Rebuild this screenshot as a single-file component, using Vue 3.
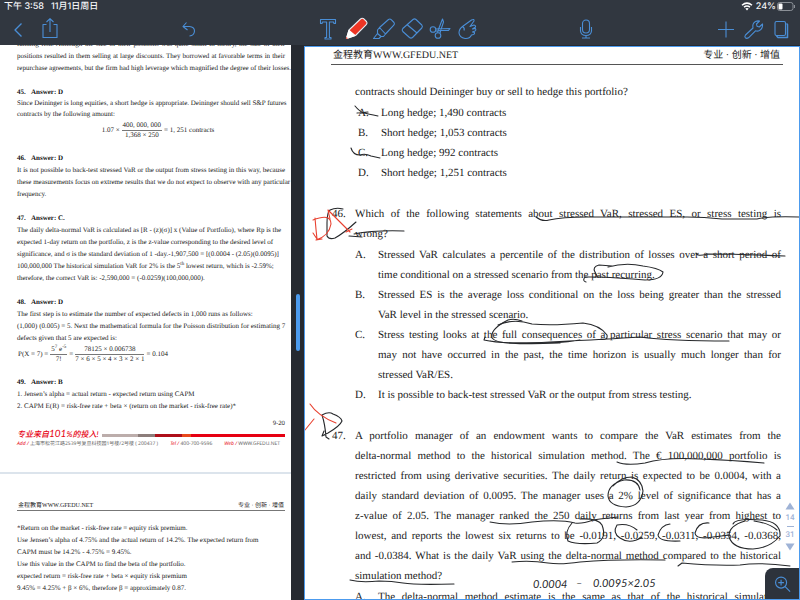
<script setup>
const questions = [
  {
    number: '',
    wide: true,
    stem: [{ t: 'contracts should Deininger buy or sell to hedge this portfolio?' }],
    options: [
      { k: 'A.', lines: [{ t: 'Long hedge; 1,490 contracts' }] },
      { k: 'B.', lines: [{ t: 'Short hedge; 1,053 contracts' }] },
      { k: 'C.', lines: [{ t: 'Long hedge; 992 contracts' }] },
      { k: 'D.', lines: [{ t: 'Short hedge; 1,251 contracts' }] },
    ],
  },
  {
    number: '46.',
    stem: [
      { t: 'Which of the following statements about stressed VaR, stressed ES, or stress testing is', j: true },
      { t: 'wrong?' },
    ],
    options: [
      {
        k: 'A.',
        lines: [
          { t: 'Stressed VaR calculates a percentile of the distribution of losses over a short period of', j: true },
          { t: 'time conditional on a stressed scenario from the past recurring.' },
        ],
      },
      {
        k: 'B.',
        lines: [
          { t: 'Stressed ES is the average loss conditional on the loss being greater than the stressed', j: true },
          { t: 'VaR level in the stressed scenario.' },
        ],
      },
      {
        k: 'C.',
        lines: [
          { t: 'Stress testing looks at the full consequences of a particular stress scenario that may or', j: true },
          { t: 'may not have occurred in the past, the time horizon is usually much longer than for', j: true },
          { t: 'stressed VaR/ES.' },
        ],
      },
      { k: 'D.', lines: [{ t: 'It is possible to back-test stressed VaR or the output from stress testing.' }] },
    ],
  },
  {
    number: '47.',
    stem: [
      { t: 'A portfolio manager of an endowment wants to compare the VaR estimates from the', j: true },
      { t: 'delta-normal method to the historical simulation method. The € 100,000,000 portfolio is', j: true },
      { t: 'restricted from using derivative securities. The daily return is expected to be 0.0004, with a', j: true },
      { t: 'daily standard deviation of 0.0095. The manager uses a 2% level of significance that has a', j: true },
      { t: 'z-value of 2.05. The manager ranked the 250 daily returns from last year from highest to', j: true },
      { t: 'lowest, and reports the lowest six returns to be -0.0191, -0.0259, -0.0311, -0.0354, -0.0368,', j: true },
      { t: 'and -0.0384. What is the daily VaR using the delta-normal method compared to the historical', j: true },
      { t: 'simulation method?' },
    ],
    options: [
      {
        k: 'A.',
        lines: [{ t: 'The delta-normal method estimate is the same as that of the historical simulation', j: true }],
      },
    ],
  },
]

const blackInk = [
  'M355 106Q360 112 364 113T378 116M357 113L368 112',
  'M351 148Q353 155 360 155Q365 153 371 156L380 158',
  'M343 209Q336 207 330 210Q327 213 327 223V236Q329 240 335 238Q344 233 356 222',
  'M349 236L362 237M354 234Q374 230 404 231',
  'M536 217Q542 222 549 220Q562 217 587 217H687Q704 217 722 219H757Q770 216 799 217',
  'M696 253Q697 257 707 254Q740 254 785 256',
  'M608 267Q626 262 643 266Q658 268 663 272Q662 280 645 280Q620 278 600 277H585Q582 281 586 282M595 272Q592 267 599 265L612 266M595 272L597 276',
  'M522 321Q514 318 508 320Q490 329 492 338Q496 343 512 343H560',
  'M498 325Q514 318 532 324Q552 326 583 323Q600 325 607 335Q608 341 601 339M485 337L484 340Q505 345 550 342Q610 339 640 337Q670 341 729 341M490 341Q535 347 580 340',
  'M322 415Q329 411 333 414Q341 417 342 421Q340 426 328 433L322 436L324 431M322 415Q325 424 326 437L329 439',
  'M617 462Q626 466 645 463Q665 457 700 459Q730 460 764 463',
  'M613 486Q621 477 632 477Q642 480 643 491Q641 506 626 507Q609 506 608 496Q608 484 624 480Q638 479 640 490',
  'M490 522Q508 526 532 522Q560 519 575 523Q582 524 593 520L600 519L618 517',
  'M572 523Q564 532 568 541Q577 545 597 543Q607 538 602 525Q598 518 580 519',
  'M637 530Q629 523 617 525Q612 533 620 538Q630 545 642 537',
  'M670 524Q661 525 658 535Q659 542 680 541',
  'M709 523Q698 522 695 533Q696 540 713 537L730 535',
  'M745 521Q728 526 729 537Q733 549 753 549Q770 548 780 536Q781 522 762 520Q735 518 733 524M754 521Q769 523 777 530',
  'M512 562Q530 560 548 563Q560 565 580 562Q615 559 665 560',
  'M678 566L682 563Q714 566 740 565Q760 562 790 566',
  'M350 580Q361 583 379 581Q392 581 403 583T454 584',
]
const redInk = [
  'M315 218Q316 230 317 239L313 233M313 220Q331 213 331 224Q329 236 316 240L322 239',
  'M328 210L350 232M328 210L330 219M346 232L352 229',
  'M310 404Q318 416 336 423M305 430L314 419',
]
</script>

<template>
  <div class="app">
    <header class="topbar">
      <div class="status">
        <div class="status-side"><span>下午 3:58</span><span>11月1日周日</span></div>
        <div class="status-side battery-side">
          <svg class="wifi" viewBox="0 0 12 9"><path d="M1 3.2Q6-1 11 3.2M3 5.2Q6 3 9 5.2" fill="none" stroke="#fff" stroke-width="1.5" /><path d="M4.3 6.6Q6 5.4 7.7 6.6L6 8.6Z" fill="#fff" /></svg>
          <span>24%</span>
          <svg class="battery" viewBox="0 0 19 9"><rect x=".5" y=".5" width="15.5" height="8" rx="2.2" fill="none" stroke="#8b9097" /><rect x="1.5" y="1.5" width="4" height="6" rx="1" fill="#fff" /><path d="M17.5 3V6" stroke="#8b9097" /></svg>
        </div>
      </div>
      <nav class="tools">
        <div class="group spaced">
          <button aria-label="Back"><svg viewBox="0 0 24 24"><path d="M15.5 6.5L9 13L15.5 19.5" stroke-width="1.4" /></svg></button>
          <button aria-label="Share"><svg viewBox="0 0 24 24"><path d="M8.5 7.5H5V20.5H19V7.5H15.5M12 15V2M8.5 5L12 1.7L15.5 5" /></svg></button>
        </div>
        <div class="group">
          <button aria-label="Undo"><svg viewBox="0 0 24 24"><path d="M9.500 5.500L6 9.500L10.500 13M6.300 9.500H12.500Q17.500 10 17.500 14Q17.300 18.500 12.500 19" /></svg></button>
        </div>
        <div class="group">
          <button aria-label="Text"><svg viewBox="0 0 24 24"><path d="M4.500 2.500H19.500V6.500H18L17.500 5H13.400V20.500H15V22H9V20.500H10.600V5H6.500L6 6.500H4.500Z" /></svg></button>
          <button aria-label="Pen"><svg viewBox="0 0 24 24"><path d="M16.500 2Q18 .5 19.800 1.800L22.500 4.500Q23.600 6 22.500 7.300L11.500 18.500L2.500 21.500L5 13Z" fill="#ee3524" stroke="#e9edf2" /><path d="M5 13.500L11 18.500L2.500 21.500Z" fill="#fff" stroke="#fff" /><path d="M2.200 20L4 21.200L2 22Z" fill="#ee3524" stroke="none" /></svg></button>
          <button aria-label="Highlighter"><svg viewBox="0 0 24 24"><path d="M7.500 10.500L16.500 2.500Q18 1.500 19.200 2.700L22 5.500Q23 7 21.800 8.200L13.500 17ZM7.500 10.500L5.500 13L5.500 16.500L9 19.500L11.500 19.500L13.500 17M5.500 16.500L1.500 21.500H7L9 19.500" /></svg></button>
          <button aria-label="Eraser"><svg viewBox="0 0 24 24"><path d="M13 2.500Q14.500 1.200 16 2.500L21.800 8Q23 9.500 21.800 11L12.500 20.500Q11 21.700 9.500 20.500L2.800 14.500Q1.500 13 2.800 11.500ZM7.500 8L17 16" /></svg></button>
          <button aria-label="Scissors"><svg viewBox="0 0 24 24"><circle cx="5" cy="12.500" r="2.800" /><circle cx="10" cy="18.500" r="2.800" /><path d="M7.800 12L22 11.500L20.500 13.500L12 13.500L7.500 14M9.500 15.700L11 11L14.500 2L15.500 5L13 12.500L12 16.200" /></svg></button>
          <button aria-label="Hand"><svg viewBox="0 0 24 24"><path d="M6.500 9.500L15.500 3Q18.500 1.500 18 4L14 9.500L18 8Q20 8.500 19.500 10L16.500 12L19.500 11.500Q20.500 13 19 14L16.500 15L18.500 15.500Q19 17 17.500 17.500L15.500 18Q13.500 22 9 21.500Q3.500 20.500 3 16Q3 12 6.500 9.500ZM6.500 9.500Q9 11 8 13.500" /></svg></button>
        </div>
        <div class="group">
          <button aria-label="Microphone"><svg viewBox="0 0 24 24"><rect x="8.500" y="3" width="7" height="13" rx="3.500" /><path d="M6.500 10V14Q7 18.500 12 18.500Q17 18.500 17.500 14V10M12 18.500V21M8 21H16" /></svg></button>
        </div>
        <div class="group">
          <button aria-label="Add"><svg viewBox="0 0 24 24"><path d="M12 4.500V20.500M4 12.500H20" /></svg></button>
          <button aria-label="Settings"><svg viewBox="0 0 24 24"><path d="M3.500 18L11 11Q10 6.500 13.500 4.500Q15.500 3.500 17.500 4L14.500 7L15 9.200L17.300 10L20.500 7Q21 11.500 17.500 13.500Q15.500 14.500 13.500 13.800L6.500 20.800Q4.500 22 3.300 20.700Q2.300 19.500 3.500 18Z" /></svg></button>
          <button aria-label="Pages"><svg viewBox="0 0 24 24"><rect x="5" y="4.500" width="10.500" height="14" rx="1.500" /><path d="M16.500 6.500L17.500 7.500V20.500H8L6.500 19" stroke-width="1.500" /></svg></button>
        </div>
      </nav>
    </header>

    <main class="split">
      <section class="answers">
        <article class="sheet first">
          <div class="para lead">
            <p class="just">funding risk. Although the size of their positions was quite small in theory, the size of their</p>
            <p class="just">positions resulted in them selling at large discounts. They borrowed at favorable terms in their</p>
            <p>repurchase agreements, but the firm had high leverage which magnified the degree of their losses.</p>
          </div>
          <div class="para tight">
            <h3><span>45.</span>Answer: D</h3>
            <p class="just">Since Deininger is long equities, a short hedge is appropriate. Deininger should sell S&amp;P futures</p>
            <p>contracts by the following amount:</p>
            <div class="formula centered">
              <span>1.07 ×</span><span class="frac"><span>400, 000, 000</span><span>1,368 × 250</span></span><span>= 1, 251 contracts</span>
            </div>
          </div>
          <div class="para">
            <h3><span>46.</span>Answer: D</h3>
            <p class="just">It is not possible to back-test stressed VaR or the output from stress testing in this way, because</p>
            <p class="just">these measurements focus on extreme results that we do not expect to observe with any particular</p>
            <p>frequency.</p>
          </div>
          <div class="para">
            <h3><span>47.</span>Answer: C.</h3>
            <p>The daily delta-normal VaR is calculated as [R - (z)(σ)] x (Value of Portfolio), where Rp is the</p>
            <p>expected 1-day return on the portfolio, z is the z-value corresponding to the desired level of</p>
            <p>significance, and σ is the standard deviation of 1 -day.-1,907,500 = [(0.0004 - (2.05)(0.0095)]</p>
            <p>100,000,000 The historical simulation VaR for 2% is the 5<sup>th</sup> lowest return, which is -2.59%;</p>
            <p>therefore, the correct VaR is: -2,590,000 = (-0.0259)(100,000,000).</p>
          </div>
          <div class="para poisson">
            <h3><span>48.</span>Answer: D</h3>
            <p>The first step is to estimate the number of expected defects in 1,000 runs as follows:</p>
            <p class="just">(1,000) (0.005) = 5. Next the mathematical formula for the Poisson distribution for estimating 7</p>
            <p>defects given that 5 are expected is:</p>
            <div class="formula">
              <span>P(X = 7) =</span><span class="frac"><span>5<sup>7</sup> e<sup>-5</sup></span><span>7!</span></span><span>=</span><span class="frac"><span>78125 × 0.006738</span><span>7 × 6 × 5 × 4 × 3 × 2 × 1</span></span><span>= 0.104</span>
            </div>
          </div>
          <div class="para last">
            <h3><span>49.</span>Answer: B</h3>
            <p>1. Jensen’s alpha = actual return - expected return using CAPM</p>
            <p>2. CAPM E(R) = risk-free rate + beta × (return on the market - risk-free rate)*</p>
          </div>
          <footer class="sheet-foot">
            <div class="folio">9-20</div>
            <div class="brand">
              <span class="slogan">专业来自<b>101</b>%的投入!</span>
              <span class="stripe"><i class="s1"></i><i class="s2"></i><i class="s3"></i><i class="s4"></i><i class="s5"></i></span>
            </div>
            <div class="contact">
              <span><em>Add /</em> 上海市松花江路2539号复旦科技园1号楼/2号楼 ( 200437 )</span>
              <span><em>Tel /</em> 400-700-9596</span>
              <span><em>Web /</em> WWW.GFEDU.NET</span>
            </div>
          </footer>
        </article>
        <article class="sheet second">
          <div class="running small"><span>金程教育WWW.GFEDU.NET</span><span>专业 · 创新 · 增值</span></div>
          <p>*Return on the market - risk-free rate = equity risk premium.</p>
          <p>Use Jensen’s alpha of 4.75% and the actual return of 14.2%. The expected return from</p>
          <p>CAPM must be 14.2% - 4.75% = 9.45%.</p>
          <p>Use this value in the CAPM to find the beta of the portfolio.</p>
          <p>expected return = risk-free rate + beta × equity risk premium</p>
          <p>9.45% = 4.25% + β × 6%, therefore β = approximately 0.87.</p>
        </article>
      </section>

      <div class="divider"><span class="grip"></span></div>

      <section class="reader">
        <div class="running"><span>金程教育WWW.GFEDU.NET</span><span>专业 · 创新 · 增值</span></div>
        <div class="questions">
          <div v-for="(q, i) in questions" :key="i" class="question">
            <span class="num">{{ q.number }}</span>
            <div>
              <div class="stem">
                <p v-for="(l, n) in q.stem" :key="n" :class="{ just: l.j }">{{ l.t }}</p>
              </div>
              <div v-for="(o, n) in q.options" :key="n" class="option" :class="{ wide: q.wide }">
                <span>{{ o.k }}</span>
                <div><p v-for="(l, m) in o.lines" :key="m" :class="{ just: l.j }">{{ l.t }}</p></div>
              </div>
            </div>
          </div>
        </div>

        <svg class="ink" viewBox="305 47 494 552">
          <path v-for="(d, i) in blackInk" :key="'b' + i" :d="d" stroke="#26282b" />
          <path v-for="(d, i) in redInk" :key="'r' + i" :d="d" stroke="#e8402f" />
          <g class="note">
            <text x="533" y="588">0.0004</text>
            <text x="576" y="587">–</text>
            <text x="593" y="587">0.0095×2.05</text>
          </g>
        </svg>

        <div class="pager">
          <button aria-label="Previous page"><svg viewBox="0 0 10 8"><path d="M5 .5L9.500 7.500H.5Z" /></svg></button>
          <span>14</span><i></i><span>31</span>
          <button aria-label="Next page"><svg viewBox="0 0 10 8"><path d="M5 7.500L.5.5H9.500Z" /></svg></button>
        </div>
        <button class="zoom" aria-label="Zoom in"><svg viewBox="0 0 20 20"><circle cx="8.500" cy="8" r="5.800" /><path d="M12.800 12.300L18 17.500M8.500 5V11M5.500 8H11.500" /></svg></button>
      </section>
    </main>
  </div>
</template>

<style>
body {
  margin: 0;
  background: #262a31;
}
</style>

<style scoped>
.app {
  height: 100vh;
  display: flex;
  flex-direction: column;
  overflow: hidden;
  font-family: "Liberation Serif", "Noto Sans CJK SC", serif;
  text-rendering: geometricPrecision;
  color: #222;
}
p, h3 { margin: 0; white-space: nowrap; }
.just { text-align: justify; text-align-last: justify; }
button { padding: 0; border: 0; background: none; display: flex; align-items: center; justify-content: center; }
.topbar { flex: none; height: 45px; background: #313740; }
.status {
  display: flex;
  justify-content: space-between;
  height: 13px;
  padding: 0 4px;
  font: 500 9px/13px Inter, "Noto Sans CJK SC", sans-serif;
  color: #f4f5f7;
}
.status-side { display: flex; align-items: center; gap: 7px; }
.battery-side { gap: 1px; }
.wifi { width: 12px; height: 9px; margin-right: 2px; }
.battery { width: 19px; height: 9px; }
.tools {
  display: grid;
  grid-template-columns: 171fr 139fr 258fr 140fr 84fr;
  height: 32px;
  padding: 0 4px;
  align-items: center;
}
.group { display: flex; }
.spaced { gap: 4px; }
.tools button { width: 28px; height: 28px; }
.tools svg { width: 24px; height: 24px; fill: none; stroke: #4a8ed6; stroke-width: 1.1; stroke-linejoin: round; overflow: visible; }

.split { flex: 1; min-height: 0; display: grid; grid-template-columns: 291fr 13px 496fr; }
.answers { overflow: hidden; background: #fff; font-size: 7px; line-height: 12px; min-width: 0; }
.sheet { padding: 0 6px 0 17px; background: #fff; }
.first { border-bottom: 2px solid #dce4ec; padding-bottom: 23px; }
.lead { margin-top: -7px; }
.para { margin-bottom: 12px; }
.tight p { line-height: 11px; }
h3 { font-size: 7px; font-weight: bold; line-height: 12px; color: #111; }
h3 span { display: inline-block; width: 14px; }
sup { font-size: 5px; line-height: 0; }
.formula { display: flex; align-items: center; gap: 2px; height: 20px; padding-left: 1px; }
.centered { justify-content: center; padding-left: 14px; }
.frac { display: flex; flex-direction: column; text-align: center; line-height: 9px; white-space: nowrap; }
.frac > span:first-child { border-bottom: 1px solid #777; padding: 0 1px; }
.last { margin-bottom: 6px; }
.sheet-foot { font-family: "Noto Sans", "Noto Sans CJK SC", sans-serif; }
.folio { text-align: right; font-size: 6px; line-height: 10px; }
.brand { display: flex; align-items: center; gap: 4px; height: 12px; }
.slogan { color: #e60012; font-style: italic; font-size: 8px; font-weight: 500; white-space: nowrap; font-family: Lato, "Noto Sans CJK SC", sans-serif; }
.slogan b { font-size: 10px; font-weight: normal; }
.stripe { flex: 1; display: flex; height: 3px; margin-top: 3px; }
.s1 { flex: 36; background: #bcadab; }
.s2 { flex: 18; background: #8c7d7a; }
.s3 { flex: 27; background: #ae0f19; }
.s4 { flex: 10; background: #e8481c; }
.s5 { flex: 96; background: #e60012; }
.contact { display: flex; justify-content: space-between; font-size: 5px; line-height: 9px; color: #666; white-space: nowrap; padding-right: 5px; }
.contact em { color: #e60012; }
.second { padding-top: 29px; }

.running {
  display: flex;
  justify-content: space-between;
  margin: 0 16px 0 26px;
  padding: 0 3px 0 2px;
  font-size: 10px;
  line-height: 17px;
  border-bottom: 1px solid #555;
}
.small { font-size: 6px; line-height: 7px; margin: 0 0 11px; padding: 0 1px; border-color: #777; }

.divider { background: #262a31; display: flex; align-items: center; justify-content: center; }
.grip { width: 4px; height: 57px; border-radius: 2px; background: #4c9bee; }

.reader {
  position: relative;
  min-width: 0;
  margin-top: 1px;
  border: 1px solid #4c9bee;
  background: #fff;
  overflow: hidden;
}
.questions { padding: 17px 18px 0 27px; font-size: 11px; line-height: 20px; color: #1c1c1c; }
.question { display: grid; grid-template-columns: 23px 1fr; margin-bottom: 21px; }
.stem { margin-bottom: 1px; }
.option { display: grid; grid-template-columns: 23px 1fr; }
.wide { padding-left: 3px; }
.ink { position: absolute; left: 0; top: 0; width: 494px; height: 552px; fill: none; stroke-width: 1.1; stroke-linecap: round; stroke-linejoin: round; pointer-events: none; }
.note { fill: #26282b; stroke: none; font: italic 11px Lato, sans-serif; }
.pager {
  position: absolute;
  right: 3px;
  bottom: 48px;
  width: 12px;
  display: flex;
  flex-direction: column;
  align-items: center;
  gap: 2px;
  font: 500 8px/12px Roboto, sans-serif;
  color: #9fb3d6;
}
.pager svg { width: 10px; height: 8px; fill: #9fb3d6; }
.pager i { width: 7px; height: 1px; background: #9fb3d6; }
.zoom { position: absolute; right: -1px; bottom: -1px; width: 35px; height: 32px; background: #2d333c; border-radius: 8px 0 0 0; }
.zoom svg { width: 19px; height: 19px; fill: none; stroke: #4a8ed6; stroke-width: 1.2; }
</style>
